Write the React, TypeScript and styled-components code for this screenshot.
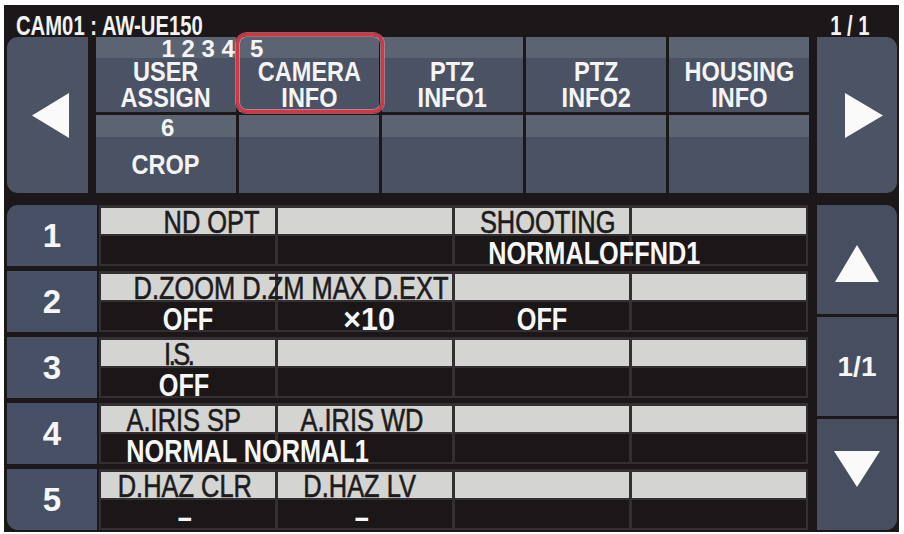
import React from 'react';
import styled, { createGlobalStyle } from 'styled-components';

const SANS = `"Liberation Sans", Arial, sans-serif`;

const Global = createGlobalStyle`
  html, body { margin: 0; padding: 0; background: #ffffff; }
  body { font-family: ${SANS}; }
`;

const Screen = styled.div`
  box-sizing: border-box;
  margin: 5px 5px 0 4px;
  width: 895px;
  height: 527px;
  background: #1c1819;
  padding: 0 2px 2px 3px;
  display: flex;
  flex-direction: column;
`;

const Header = styled.header`
  height: 32px;
  flex: none;
  display: flex;
  justify-content: space-between;
  align-items: flex-end;
  padding: 0 27px 0 9px;
  font-family: ${SANS};
  font-weight: 700;
  font-size: 27px;
  line-height: 22px;
  color: #f2f2f2;
  white-space: pre;
`;

const HeaderText = styled.span<{ $origin: 'left' | 'right' }>`
  display: inline-block;
  transform: scaleX(0.75);
  transform-origin: ${(p) => p.$origin} center;
`;

const TopSection = styled.div`
  height: 156px;
  flex: none;
  display: flex;
  justify-content: space-between;
`;

const NavButton = styled.div<{ $side: 'left' | 'right' }>`
  box-sizing: border-box;
  width: ${(p) => (p.$side === 'left' ? 81 : 80)}px;
  background: #4c5365;
  border-radius: ${(p) => (p.$side === 'left' ? '11px 0 0 11px' : '0 11px 11px 0')};
  display: flex;
  align-items: center;
  justify-content: center;
  padding-left: ${(p) => (p.$side === 'left' ? 6 : 14)}px;
`;

const TabGrid = styled.div`
  position: relative;
  width: 714px;
  display: grid;
  grid-template-columns: repeat(5, minmax(0, 1fr));
  grid-template-rows: 75px 78px;
  gap: 3px;
`;

const Tab = styled.div<{ $band: number }>`
  display: grid;
  grid-template-columns: minmax(0, 1fr);
  grid-template-rows: ${(p) => p.$band}px minmax(0, 1fr);
  background: #4b5264;
  min-width: 0;
`;

const Band = styled.div<{ $start?: number }>`
  --sx: 1;
  background: #5c6474;
  display: flex;
  justify-content: ${(p) => (p.$start !== undefined ? 'flex-start' : 'center')};
  align-items: flex-end;
  padding-left: ${(p) => p.$start ?? 0}px;
  font-family: ${SANS};
  font-weight: 700;
  font-size: 24px;
  line-height: 19px;
  color: #f4f4f4;
  white-space: pre;
  min-width: 0;
`;

const TabBody = styled.div`
  --sx: 0.84;
  display: flex;
  align-items: center;
  justify-content: center;
  text-align: center;
  font-family: ${SANS};
  font-weight: 700;
  font-size: 28px;
  line-height: 26px;
  color: #f4f4f4;
  white-space: nowrap;
  min-width: 0;
`;

const OverText = styled.span<{ $shift?: number; $gap?: number; $sx?: number; $ls?: number }>`
  position: relative;
  z-index: 2;
  flex: none;
  margin-left: ${(p) => (p.$shift ?? 0) + (p.$gap ?? 0)}px;
  margin-right: ${(p) => -(p.$shift ?? 0)}px;
  letter-spacing: ${(p) => p.$ls ?? 0}px;
  transform: scaleX(${(p) => (p.$sx !== undefined ? p.$sx : 'var(--sx, 1)')});
  transform-origin: center;
`;

const Highlight = styled.div`
  position: absolute;
  left: 140px;
  top: -4px;
  width: 148px;
  height: 80px;
  box-sizing: border-box;
  border: 3px solid #d83543;
  border-radius: 11px;
  box-shadow: 0 0 0 1px rgba(235, 150, 160, 0.55), inset 0 0 0 1px rgba(240, 170, 180, 0.6);
  pointer-events: none;
  z-index: 1;
`;

const Lower = styled.div`
  margin-top: 12px;
  height: 325px;
  flex: none;
  display: flex;
  gap: 9px;
`;

const Rows = styled.div`
  width: 801px;
  display: flex;
  flex-direction: column;
  gap: 5px;
`;

const Row = styled.div`
  height: 61px;
  display: grid;
  grid-template-columns: 90px 709px;
  column-gap: 2px;
`;

const NumCell = styled.div<{ $pos: 'first' | 'mid' | 'last' }>`
  background: #475064;
  border-radius: ${(p) => (p.$pos === 'first' ? '11px 0 0 0' : p.$pos === 'last' ? '0 0 0 11px' : '0')};
  display: flex;
  align-items: center;
  justify-content: center;
  font-family: ${SANS};
  font-weight: 700;
  font-size: 33px;
  color: #f6f6f6;
`;

const DataFrame = styled.div`
  box-sizing: border-box;
  background: #343031;
  padding: 3px 2px 2px;
  display: grid;
  grid-template-columns: repeat(4, minmax(0, 1fr));
  column-gap: 3px;
`;

const Cell = styled.div`
  display: grid;
  grid-template-columns: minmax(0, 1fr);
  grid-template-rows: 26px 28px;
  row-gap: 2px;
  min-width: 0;
`;

const Part = styled.div<{ $value?: boolean }>`
  --sx: ${(p) => (p.$value ? 0.79 : 0.82)};
  background: ${(p) => (p.$value ? '#1b1718' : '#d4d4d3')};
  color: ${(p) => (p.$value ? '#f7f7f7' : '#1d1b1c')};
  font-family: ${SANS};
  font-weight: ${(p) => (p.$value ? 700 : 400)};
  font-size: ${(p) => (p.$value ? 32 : 31)}px;
  line-height: 22px;
  -webkit-text-stroke: ${(p) => (p.$value ? '0' : '0.6px #1d1b1c')};
  display: flex;
  justify-content: center;
  align-items: flex-end;
  white-space: pre;
  min-width: 0;
`;

const ScrollCol = styled.div`
  width: 80px;
  display: flex;
  flex-direction: column;
  gap: 3px;
`;

const ScrollBtn = styled.div<{ $pos: 'up' | 'mid' | 'down' }>`
  box-sizing: border-box;
  flex: 1;
  background: #464e60;
  border-radius: ${(p) => (p.$pos === 'up' ? '0 11px 0 0' : p.$pos === 'down' ? '0 0 11px 0' : '0')};
  display: flex;
  align-items: center;
  justify-content: center;
  padding-top: ${(p) => (p.$pos === 'up' ? 9 : 0)}px;
  padding-bottom: ${(p) => (p.$pos === 'down' ? 11 : 0)}px;
  font-family: ${SANS};
  font-weight: 700;
  font-size: 28px;
  color: #f6f6f6;
`;

const Tri = ({ w, h, pts }: { w: number; h: number; pts: string }) => (
  <svg width={w} height={h} viewBox={`0 0 ${w} ${h}`}>
    <polygon points={pts} fill="#fafafa" />
  </svg>
);

type T = { t: string; s?: number; sx?: number; ls?: number } | null;

const rows: { labels: T[]; values: T[] }[] = [
  {
    labels: [{ t: 'ND OPT', s: 24 }, null, { t: 'SHOOTING', s: 6 }, null],
    values: [null, null, { t: 'NORMALOFFND1', s: 52 }, null],
  },
  {
    labels: [{ t: 'D.ZOOM D.ZM MAX D.EXT', s: 103 }, null, null, null],
    values: [{ t: 'OFF', s: 0 }, { t: '×10', s: 4, sx: 0.95 }, { t: 'OFF', s: 0 }, null],
  },
  {
    labels: [{ t: 'I.S.', s: -10, ls: -3 }, null, null, null],
    values: [{ t: 'OFF', s: -4 }, null, null, null],
  },
  {
    labels: [{ t: 'A.IRIS SP', s: -4 }, { t: 'A.IRIS WD', s: -3 }, null, null],
    values: [{ t: 'NORMAL NORMAL1', s: 59 }, null, null, null],
  },
  {
    labels: [{ t: 'D.HAZ CLR', s: -3 }, { t: 'D.HAZ LV', s: -5 }, null, null],
    values: [{ t: '–', s: -3 }, { t: '–', s: -3 }, null, null],
  },
];

const tabs = [
  ['USER', 'ASSIGN'],
  ['CAMERA', 'INFO'],
  ['PTZ', 'INFO1'],
  ['PTZ', 'INFO2'],
  ['HOUSING', 'INFO'],
];

export default function App() {
  return (
    <>
      <Global />
      <Screen>
        <Header>
          <HeaderText $origin="left">CAM01 : AW-UE150</HeaderText>
          <HeaderText $origin="right">1 / 1</HeaderText>
        </Header>
        <TopSection>
          <NavButton $side="left">
            <Tri w={37} h={45} pts="37,0 37,45 0,22.5" />
          </NavButton>
          <TabGrid>
            {tabs.map((lines, i) => (
              <Tab key={`a${i}`} $band={21}>
                {i === 0 ? (
                  <Band $start={66}>
                    <OverText>1 2 3 4</OverText>
                    <OverText $gap={15}>5</OverText>
                  </Band>
                ) : (
                  <Band />
                )}
                <TabBody>
                  <OverText>
                    {lines[0]}
                    <br />
                    {lines[1]}
                  </OverText>
                </TabBody>
              </Tab>
            ))}
            {tabs.map((_, i) => (
              <Tab key={`b${i}`} $band={22}>
                {i === 0 ? (
                  <Band>
                    <OverText $shift={2}>6</OverText>
                  </Band>
                ) : (
                  <Band />
                )}
                <TabBody>{i === 0 ? <OverText>CROP</OverText> : null}</TabBody>
              </Tab>
            ))}
            <Highlight />
          </TabGrid>
          <NavButton $side="right">
            <Tri w={38} h={45} pts="0,0 38,22.5 0,45" />
          </NavButton>
        </TopSection>
        <Lower>
          <Rows>
            {rows.map((r, i) => (
              <Row key={i}>
                <NumCell $pos={i === 0 ? 'first' : i === rows.length - 1 ? 'last' : 'mid'}>{i + 1}</NumCell>
                <DataFrame>
                  {r.labels.map((l, c) => {
                    const v = r.values[c];
                    return (
                      <Cell key={c}>
                        <Part>
                          {l ? (
                            <OverText $shift={l.s} $sx={l.sx} $ls={l.ls}>
                              {l.t}
                            </OverText>
                          ) : null}
                        </Part>
                        <Part $value>
                          {v ? (
                            <OverText $shift={v.s} $sx={v.sx} $ls={v.ls}>
                              {v.t}
                            </OverText>
                          ) : null}
                        </Part>
                      </Cell>
                    );
                  })}
                </DataFrame>
              </Row>
            ))}
          </Rows>
          <ScrollCol>
            <ScrollBtn $pos="up">
              <Tri w={44} h={37} pts="22,0 44,37 0,37" />
            </ScrollBtn>
            <ScrollBtn $pos="mid">1/1</ScrollBtn>
            <ScrollBtn $pos="down">
              <Tri w={46} h={36} pts="0,0 46,0 23,36" />
            </ScrollBtn>
          </ScrollCol>
        </Lower>
      </Screen>
    </>
  );
}
